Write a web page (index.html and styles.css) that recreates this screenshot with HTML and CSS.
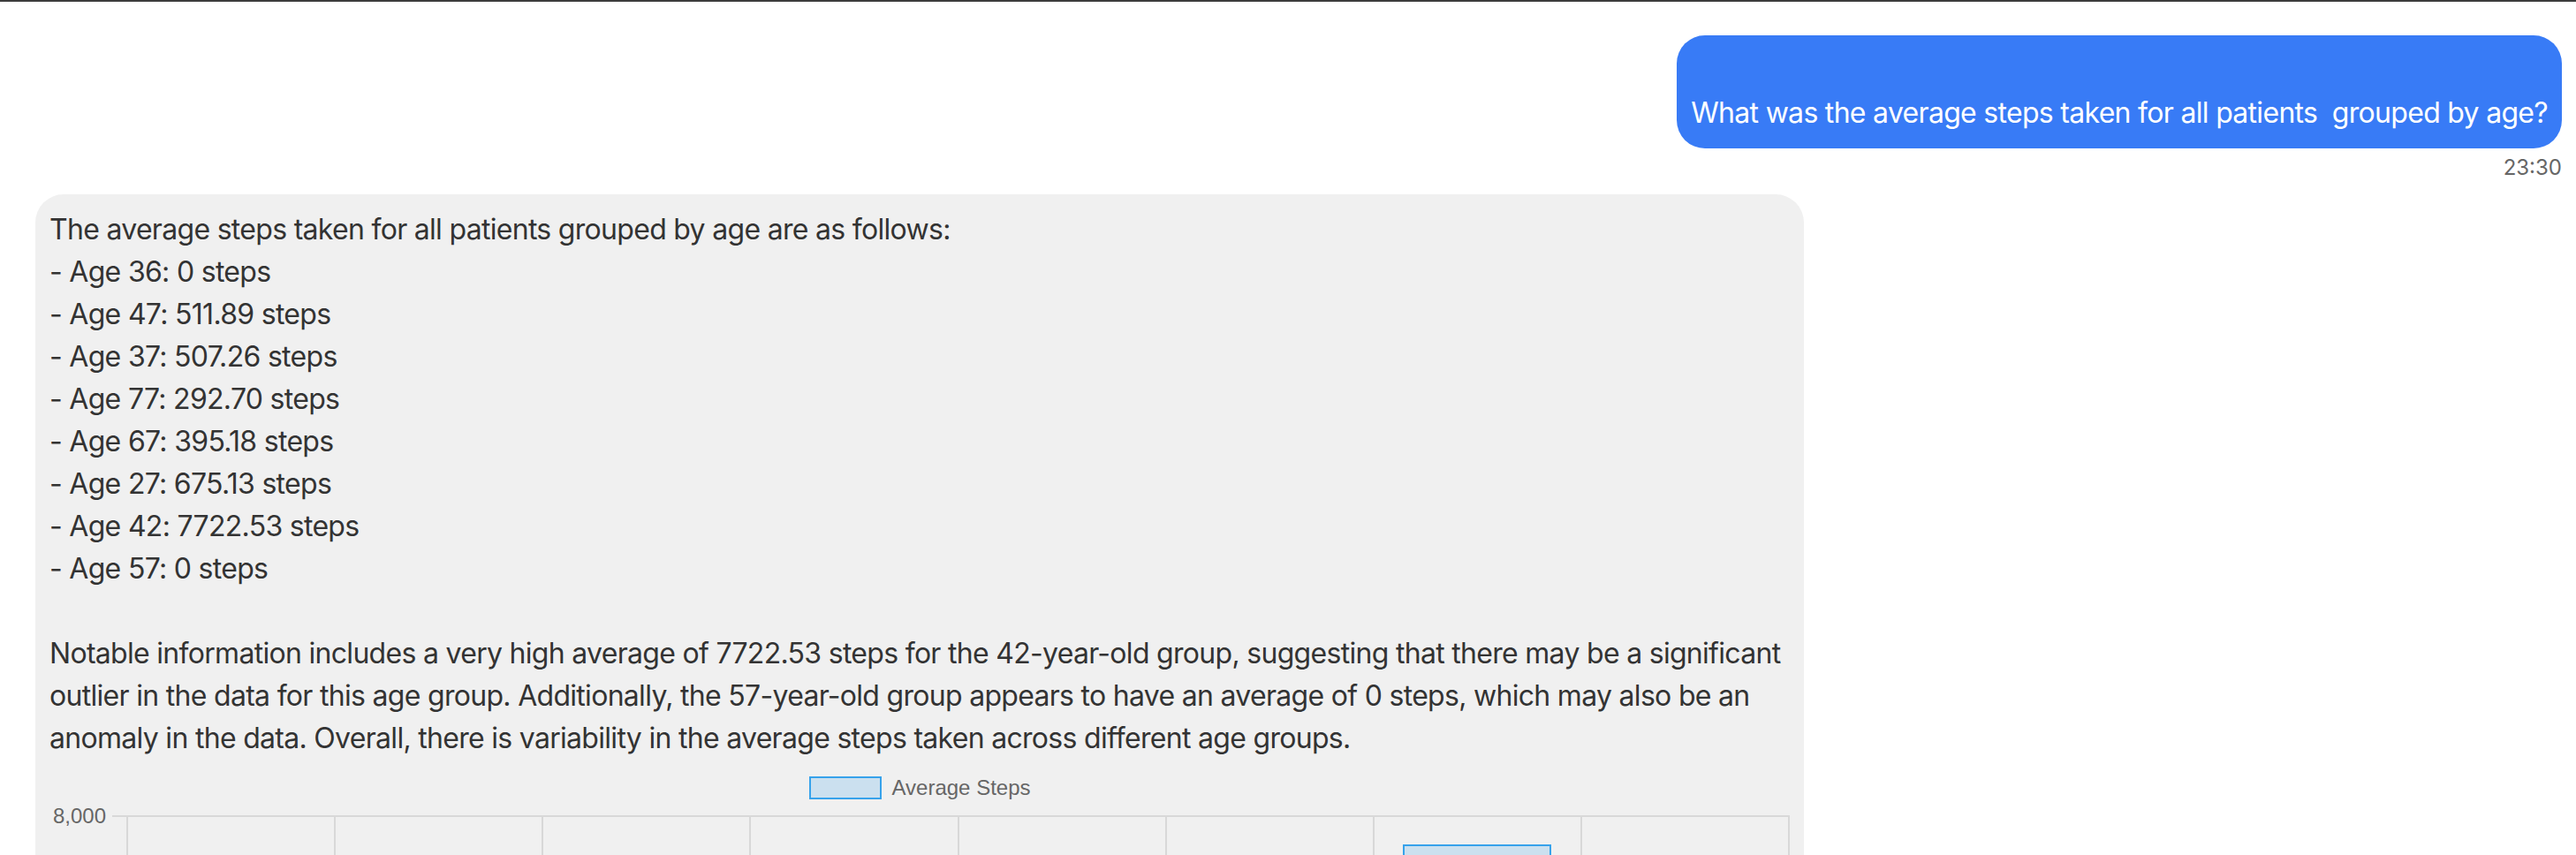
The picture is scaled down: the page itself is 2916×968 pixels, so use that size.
FILE: index.html
```html
<!DOCTYPE html>
<html lang="en">
<head>
<meta charset="utf-8">
<title>Chat</title>
<link rel="stylesheet" href="styles.css">
</head>
<body>
<div class="topline"></div>
<main class="chat">
  <div class="msg-row user-row">
    <div class="bubble user-bubble">
What was the average steps taken for all patients  grouped by age?</div>
    <div class="time">23:30</div>
  </div>
  <div class="msg-row bot-row">
    <div class="bubble bot-bubble">
      <div class="bot-text">The average steps taken for all patients grouped by age are as follows:
- Age 36: 0 steps
- Age 47: 511.89 steps
- Age 37: 507.26 steps
- Age 77: 292.70 steps
- Age 67: 395.18 steps
- Age 27: 675.13 steps
- Age 42: 7722.53 steps
- Age 57: 0 steps

Notable information includes a very high average of 7722.53 steps for the 42-year-old group, suggesting that there may be a significant outlier in the data for this age group. Additionally, the 57-year-old group appears to have an average of 0 steps, which may also be an anomaly in the data. Overall, there is variability in the average steps taken across different age groups.</div>
      <div class="chart">
        <div class="legend">
          <span class="legend-box"></span>
          <span class="legend-label">Average Steps</span>
        </div>
        <div class="plot-row">
          <div class="yaxis">
            <div class="ytick"><span class="ylabel">8,000</span><span class="tickmark"></span></div>
            <div class="ytick"><span class="ylabel">7,000</span><span class="tickmark"></span></div>
            <div class="ytick"><span class="ylabel">6,000</span><span class="tickmark"></span></div>
            <div class="ytick"><span class="ylabel">5,000</span><span class="tickmark"></span></div>
            <div class="ytick"><span class="ylabel">4,000</span><span class="tickmark"></span></div>
            <div class="ytick"><span class="ylabel">3,000</span><span class="tickmark"></span></div>
            <div class="ytick"><span class="ylabel">2,000</span><span class="tickmark"></span></div>
            <div class="ytick"><span class="ylabel">1,000</span><span class="tickmark"></span></div>
            <div class="ytick"><span class="ylabel">0</span><span class="tickmark"></span></div>
          </div>
          <div class="plot">
            <div class="col"><div class="bar" style="height:0px"></div></div>
            <div class="col"><div class="bar" style="height:57.2px"></div></div>
            <div class="col"><div class="bar" style="height:56.7px"></div></div>
            <div class="col"><div class="bar" style="height:32.7px"></div></div>
            <div class="col"><div class="bar" style="height:44.2px"></div></div>
            <div class="col"><div class="bar" style="height:75.4px"></div></div>
            <div class="col"><div class="bar" style="height:863px"></div></div>
            <div class="col"><div class="bar" style="height:0px"></div></div>
          </div>
        </div>
        <div class="xaxis">
          <span>36</span><span>47</span><span>37</span><span>77</span><span>67</span><span>27</span><span>42</span><span>57</span>
        </div>
      </div>
    </div>
  </div>
</main>
</body>
</html>
```
FILE: styles.css
```css
* { box-sizing: border-box; }
html, body { margin: 0; padding: 0; background: #ffffff; }
body {
  font-family: Inter, "Noto Sans", sans-serif;
  color: #333333;
}
.topline {
  height: 2px;
  background: #3c3c3c;
}
.chat {
  padding: 38px 16px 0 40px;
}
.msg-row {
  display: flex;
  flex-direction: column;
}
.user-row { align-items: flex-end; }
.bot-row { align-items: flex-start; margin-top: 14px; }
.bubble {
  border-radius: 32px;
  padding: 16px;
  font-size: 32px;
  line-height: 48px;
  letter-spacing: -0.7px;
  max-width: 70%;
}
.user-bubble {
  background: #387bf6;
  color: #ffffff;
  white-space: pre-wrap;
}
.time {
  margin-top: 6px;
  font-size: 24px;
  line-height: 32px;
  color: #666666;
}
.bot-bubble {
  width: 70%;
  background: #f0f0f0;
  color: #333333;
}
.bot-text {
  white-space: pre-wrap;
}
.chart {
  font-family: "Liberation Sans", Arial, sans-serif;
  color: #666666;
  letter-spacing: 0;
}
.legend {
  display: flex;
  justify-content: center;
  align-items: center;
  gap: 12px;
  padding: 19px 0 18px;
  height: 63px;
}
.legend-box {
  width: 82px;
  height: 26px;
  border: 2px solid rgb(54, 162, 235);
  background: rgba(54, 162, 235, 0.2);
}
.legend-label {
  font-size: 24px;
  line-height: 26px;
}
.plot-row {
  display: flex;
}
.yaxis {
  width: 87px;
  height: 894px;
  display: flex;
  flex-direction: column;
  justify-content: space-between;
}
.ytick {
  height: 2px;
  display: flex;
  align-items: center;
  justify-content: flex-end;
}
.ylabel {
  font-size: 24px;
  line-height: 28px;
  margin-right: 7px;
}
.tickmark {
  width: 16px;
  height: 2px;
  background: #d8d8d8;
}
.plot {
  flex: 1;
  height: 896px;
  display: grid;
  grid-template-columns: repeat(8, 1fr);
  background-image: linear-gradient(#d8d8d8 2px, transparent 2px);
  background-size: 100% 111.75px;
  border-right: 2px solid #d8d8d8;
}
.col {
  border-left: 2px solid #d8d8d8;
  display: flex;
  align-items: flex-end;
  justify-content: center;
}
.bar {
  width: 72%;
  border: 2px solid rgb(54, 162, 235);
  border-bottom: none;
  background: rgba(54, 162, 235, 0.2);
}
.xaxis {
  display: grid;
  grid-template-columns: repeat(8, 1fr);
  margin-left: 87px;
  padding-top: 10px;
  font-size: 24px;
  text-align: center;
}
```
